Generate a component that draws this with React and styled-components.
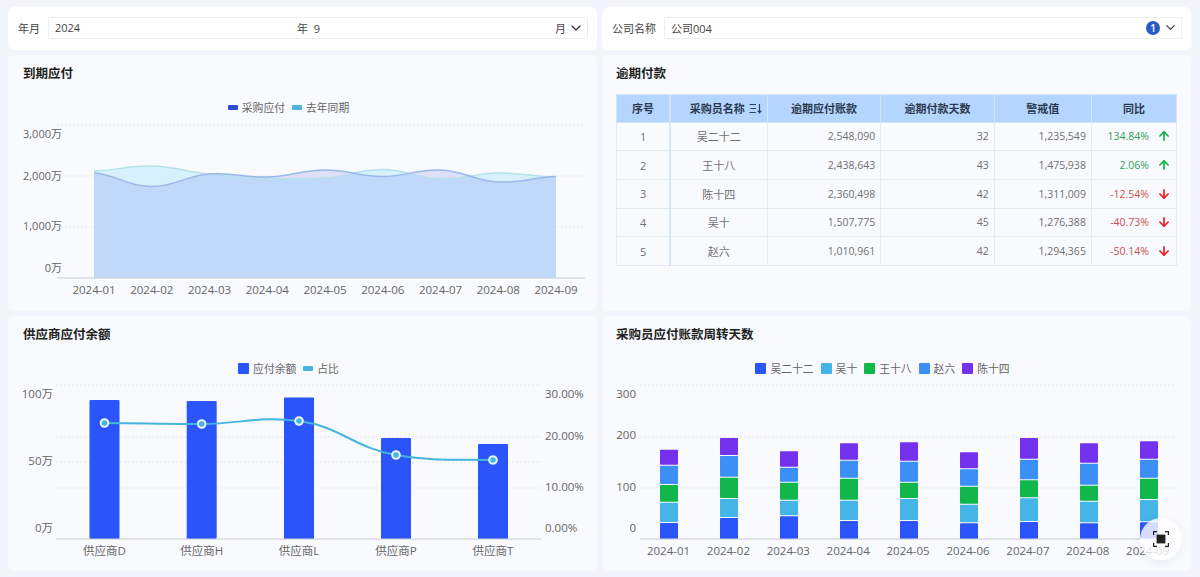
import React from 'react';
import styled, { createGlobalStyle } from 'styled-components';
import { ArrowUp, ArrowDown, ChevronDown } from 'lucide-react';

const GlobalStyle = createGlobalStyle`
  html, body {
    margin: 0;
    padding: 0;
    background: #f3f5fd;
    font-family: "Open Sans", "Noto Sans CJK SC", sans-serif;
  }
`;

const months = ['2024-01', '2024-02', '2024-03', '2024-04', '2024-05', '2024-06', '2024-07', '2024-08', '2024-09'];

const overdueRows = [
  { id: 1, name: '吴二十二', amount: '2,548,090', days: 32, limit: '1,235,549', rate: '134.84%', up: true },
  { id: 2, name: '王十八', amount: '2,438,643', days: 43, limit: '1,475,938', rate: '2.06%', up: true },
  { id: 3, name: '陈十四', amount: '2,360,498', days: 42, limit: '1,311,009', rate: '-12.54%', up: false },
  { id: 4, name: '吴十', amount: '1,507,775', days: 45, limit: '1,276,388', rate: '-40.73%', up: false },
  { id: 5, name: '赵六', amount: '1,010,961', days: 42, limit: '1,294,365', rate: '-50.14%', up: false },
];

const purchaseY = [173, 186.5, 174, 177, 170, 176.5, 170, 182, 176.5];
const lastYearY = [171, 166, 174, 178.5, 178, 169.5, 179, 173, 177];
const areaX = months.map((_, i) => 94 + i * 57.75);

const suppliers = [
  { name: '供应商D', x: 104.5, top: 400, y: 423 },
  { name: '供应商H', x: 201.7, top: 401, y: 424 },
  { name: '供应商L', x: 299, top: 397.5, y: 421 },
  { name: '供应商P', x: 396, top: 438, y: 455 },
  { name: '供应商T', x: 493, top: 444, y: 460 },
];

const stackColors = ['#2b55fb', '#45b4e6', '#12b74b', '#3b8ff5', '#7431ee'];
const stackTops = [
  [523, 502.7, 485, 465.7, 449.7],
  [518, 499, 477.7, 456, 438],
  [516.3, 500.7, 482.7, 467.7, 451.3],
  [521, 500.7, 478.7, 460.7, 443.3],
  [521, 499, 482.7, 461.7, 442.3],
  [523.3, 504.7, 486.7, 469.3, 452.3],
  [522, 498.3, 480.3, 459.7, 438],
  [523.3, 501.7, 485.7, 463.7, 443.3],
  [522.3, 500, 478.7, 459.7, 441.3],
];

function spline(xs, ys) {
  let d = `M${xs[0]} ${ys[0]}`;
  for (let i = 0; i < xs.length - 1; i++) {
    const y0 = ys[Math.max(i - 1, 0)];
    const y3 = ys[Math.min(i + 2, ys.length - 1)];
    const dx = (xs[i + 1] - xs[i]) / 2.4;
    const c1 = ys[i] + (ys[i + 1] - y0) / 6;
    const c2 = ys[i + 1] - (y3 - ys[i]) / 6;
    d += ` C${xs[i] + dx} ${c1} ${xs[i + 1] - dx} ${c2} ${xs[i + 1]} ${ys[i + 1]}`;
  }
  return d;
}

function area(xs, ys, bottom) {
  return `${spline(xs, ys)} L${xs[xs.length - 1]} ${bottom} L${xs[0]} ${bottom} Z`;
}

function DueChart() {
  const purchaseArea = area(areaX, purchaseY, 278);
  const lastYearArea = area(areaX, lastYearY, 278);
  return (
    <ChartSvg viewBox="8 117 589 193">
      <defs>
        <clipPath id="last-year-clip">
          <path d={lastYearArea} />
        </clipPath>
      </defs>
      {[125, 176, 227].map((y) => (
        <GridLine key={y} x1="57" x2="585" y1={y} y2={y} />
      ))}
      <path d={lastYearArea} fill="#d6f1fb" />
      <path d={purchaseArea} fill="#dde0f8" />
      <path d={purchaseArea} fill="#c0d9fb" clipPath="url(#last-year-clip)" />
      <path d={spline(areaX, lastYearY)} fill="none" stroke="#b5e0ec" strokeWidth="1.5" />
      <path d={spline(areaX, purchaseY)} fill="none" stroke="#9ab8ea" strokeWidth="1.5" />
      <AxisLine x1="57" x2="585" y1="278" y2="278" />
      <ValueText x="62" y="138" textAnchor="end">3,000万</ValueText>
      <ValueText x="62" y="180" textAnchor="end">2,000万</ValueText>
      <ValueText x="62" y="230" textAnchor="end">1,000万</ValueText>
      <ValueText x="62" y="272" textAnchor="end">0万</ValueText>
      {months.map((m, i) => (
        <AxisText key={m} x={areaX[i]} y="294" textAnchor="middle">{m}</AxisText>
      ))}
    </ChartSvg>
  );
}

function SupplierChart() {
  const xs = suppliers.map((s) => s.x);
  const ys = suppliers.map((s) => s.y);
  return (
    <ChartSvg viewBox="8 378 589 193">
      {[385, 437, 462, 488].map((y) => (
        <GridLine key={y} x1="56" x2="541" y1={y} y2={y} />
      ))}
      {suppliers.map((s) => (
        <rect key={s.name} x={s.x - 15} y={s.top} width="30" height={539 - s.top} rx="1" fill="#2b55fb" />
      ))}
      <AxisLine x1="56" x2="541" y1="539" y2="539" />
      <path d={spline(xs, ys)} fill="none" stroke="#45b4df" strokeWidth="2" />
      {suppliers.map((s) => (
        <circle key={s.name} cx={s.x} cy={s.y} r="3.8" fill="#45b4df" stroke="#e8f7ff" strokeWidth="2" />
      ))}
      <AxisText x="53" y="398" textAnchor="end">100万</AxisText>
      <AxisText x="53" y="465" textAnchor="end">50万</AxisText>
      <AxisText x="53" y="532" textAnchor="end">0万</AxisText>
      <AxisText x="545" y="398">30.00%</AxisText>
      <AxisText x="545" y="440">20.00%</AxisText>
      <AxisText x="545" y="491">10.00%</AxisText>
      <AxisText x="545" y="532">0.00%</AxisText>
      {suppliers.map((s) => (
        <AxisText key={s.name} x={s.x} y="555" textAnchor="middle">{s.name}</AxisText>
      ))}
    </ChartSvg>
  );
}

function TurnoverChart() {
  return (
    <ChartSvg viewBox="602 378 589 193">
      {[385, 437, 488].map((y) => (
        <GridLine key={y} x1="640" x2="1176" y1={y} y2={y} />
      ))}
      {stackTops.map((tops, i) => {
        const x = 660 + i * 60;
        return tops.map((top, j) => {
          const bottom = j === 0 ? 539 : tops[j - 1] - 1;
          return <rect key={j} x={x} y={top} width="18" height={bottom - top} rx="0.8" fill={stackColors[j]} />;
        });
      })}
      <AxisLine x1="640" x2="1176" y1="539" y2="539" />
      <AxisText x="636" y="398" textAnchor="end">300</AxisText>
      <AxisText x="636" y="439" textAnchor="end">200</AxisText>
      <AxisText x="636" y="491" textAnchor="end">100</AxisText>
      <AxisText x="636" y="532" textAnchor="end">0</AxisText>
      {months.map((m, i) => (
        <AxisText key={m} x={668.5 + i * 59.9} y="555" textAnchor="middle">{m}</AxisText>
      ))}
    </ChartSvg>
  );
}

function SortIcon() {
  return (
    <svg width="13" height="11" viewBox="0 0 13 11" fill="none" stroke="#33415c" strokeWidth="1.2">
      <path d="M0.5 1.5H7M1.5 5.5H7M0.5 9.5H7" />
      <path d="M10.5 1V9.5M8.7 7.6L10.5 9.8L12.3 7.6" />
    </svg>
  );
}

function ScanIcon() {
  return (
    <svg width="16" height="16" viewBox="0 0 16 16" fill="none" stroke="#222" strokeWidth="1.2">
      <path d="M0.6 4V0.6H4M12 0.6H15.4V4M15.4 12V15.4H12M4 15.4H0.6V12" />
      <rect x="3.6" y="3.6" width="8.8" height="8.8" fill="#222" stroke="none" />
    </svg>
  );
}

export default function App() {
  return (
    <Page>
      <GlobalStyle />
      <FilterBar>
        <FilterLabel>年月</FilterLabel>
        <FilterInput>
          <YearPart>2024</YearPart>
          <MonthPart>年&nbsp;&nbsp;9</MonthPart>
          <span>月</span>
          <ChevronDown size={16} color="#333" strokeWidth={1.8} />
        </FilterInput>
      </FilterBar>
      <FilterBar>
        <FilterLabel>公司名称</FilterLabel>
        <FilterInput>
          <MonthPart>公司004</MonthPart>
          <CountBadge>1</CountBadge>
          <ChevronDown size={15} color="#333" strokeWidth={1.8} />
        </FilterInput>
      </FilterBar>

      <Card>
        <CardTitle>到期应付</CardTitle>
        <Legend>
          <LegendItem><LegendBar $color="#2a4fd6" />采购应付</LegendItem>
          <LegendItem><LegendBar $color="#4bb8d8" />去年同期</LegendItem>
        </Legend>
        <DueChart />
      </Card>

      <Card>
        <CardTitle $inset={14}>逾期付款</CardTitle>
        <OverdueTable>
          <thead>
            <tr>
              <HeadCell $width={53.5} $strong>序号</HeadCell>
              <HeadCell $width={97}>
                <SortLabel>采购员名称 <SortIcon /></SortLabel>
              </HeadCell>
              <HeadCell $width={113.5}>逾期应付账款</HeadCell>
              <HeadCell $width={113.5}>逾期付款天数</HeadCell>
              <HeadCell $width={97}>警戒值</HeadCell>
              <HeadCell $width={85}>同比</HeadCell>
            </tr>
          </thead>
          <tbody>
            {overdueRows.map((row) => (
              <tr key={row.id}>
                <BodyCell $strong>{row.id}</BodyCell>
                <BodyCell>{row.name}</BodyCell>
                <NumberCell>{row.amount}</NumberCell>
                <NumberCell>{row.days}</NumberCell>
                <NumberCell>{row.limit}</NumberCell>
                <NumberCell>
                  <RateBox>
                    <RateText $up={row.up}>{row.rate}</RateText>
                    {row.up ? (
                      <ArrowUp size={14} color="#12b74b" strokeWidth={3} />
                    ) : (
                      <ArrowDown size={14} color="#e8262a" strokeWidth={3} />
                    )}
                  </RateBox>
                </NumberCell>
              </tr>
            ))}
          </tbody>
        </OverdueTable>
      </Card>

      <Card>
        <CardTitle>供应商应付余额</CardTitle>
        <Legend>
          <LegendItem><LegendSquare $color="#2b55fb" />应付余额</LegendItem>
          <LegendItem><LegendBar $color="#45b4df" />占比</LegendItem>
        </Legend>
        <SupplierChart />
      </Card>

      <Card>
        <CardTitle $inset={14}>采购员应付账款周转天数</CardTitle>
        <Legend>
          <LegendItem><LegendSquare $color="#2b55fb" />吴二十二</LegendItem>
          <LegendItem><LegendSquare $color="#45b4e6" />吴十</LegendItem>
          <LegendItem><LegendSquare $color="#12b74b" />王十八</LegendItem>
          <LegendItem><LegendSquare $color="#3b8ff5" />赵六</LegendItem>
          <LegendItem><LegendSquare $color="#7431ee" />陈十四</LegendItem>
        </Legend>
        <TurnoverChart />
      </Card>

      <FloatButton>
        <ScanIcon />
      </FloatButton>
    </Page>
  );
}

const Page = styled.div`
  position: relative;
  box-sizing: border-box;
  width: 1200px;
  height: 577px;
  overflow: hidden;
  padding: 7px 9px 6px 8px;
  display: grid;
  grid-template-columns: 589px 589px;
  grid-template-rows: 43px 256px 255px;
  column-gap: 5px;
  row-gap: 5px;
  background: #f3f5fd;
`;
const FilterBar = styled.div`
  display: flex;
  align-items: center;
  padding: 0 9px 2px 10px;
  background: #fff;
  border-radius: 6px;
  color: #444;
  font-size: 11px;
`;
const FilterLabel = styled.label`
  margin-right: 8px;
  white-space: nowrap;
`;
const FilterInput = styled.div`
  flex: 1;
  box-sizing: border-box;
  height: 22px;
  display: flex;
  align-items: center;
  gap: 2px;
  padding: 0 3px 0 6px;
  border: 1px solid #eceff4;
  color: #444;
  font-size: 11px;
`;
const YearPart = styled.span`
  width: 240px;
  flex-shrink: 0;
`;
const MonthPart = styled.span`
  flex: 1;
`;
const CountBadge = styled.span`
  width: 14px;
  height: 14px;
  border-radius: 50%;
  background: #2a5bc4;
  color: #fff;
  font-size: 10px;
  font-weight: 600;
  line-height: 14px;
  text-align: center;
  margin-right: 1px;
`;
const Card = styled.section`
  min-width: 0;
  background: #f9fafd;
  border-radius: 6px;
  overflow: hidden;
`;
const CardTitle = styled.h2`
  margin: 0;
  padding: 11px 15px 0 ${(p) => p.$inset ?? 15}px;
  height: 16px;
  color: #222;
  font-size: 12.5px;
  font-weight: 700;
  line-height: 16px;
`;
const Legend = styled.div`
  height: 16px;
  margin: 17px 0 2px;
  padding-right: 28px;
  display: flex;
  justify-content: center;
  align-items: center;
  gap: 7px;
  color: #666;
  font-size: 10.8px;
`;
const LegendItem = styled.span`
  display: flex;
  align-items: center;
  gap: 4px;
`;
const LegendBar = styled.i`
  width: 10px;
  height: 5px;
  border-radius: 1px;
  background: ${(p) => p.$color};
`;
const LegendSquare = styled.i`
  width: 11px;
  height: 11px;
  border-radius: 1px;
  background: ${(p) => p.$color};
`;
const ChartSvg = styled.svg`
  display: block;
  width: 589px;
  height: 193px;
`;
const GridLine = styled.line`
  stroke: #e4e7ee;
  stroke-width: 1;
  stroke-dasharray: 2 2;
`;
const AxisLine = styled.line`
  stroke: #c8ccd4;
  stroke-width: 1;
`;
const AxisText = styled.text`
  fill: #666;
  font-size: 11.5px;
  font-family: "Open Sans", "Noto Sans CJK SC", sans-serif;
`;
const ValueText = styled(AxisText)`
  font-size: 11px;
`;
const OverdueTable = styled.table`
  margin: 12px 0 0 14px;
  width: 561px;
  table-layout: fixed;
  border-collapse: collapse;
  font-size: 11px;
  color: #707070;
`;
const HeadCell = styled.th`
  width: ${(p) => p.$width}px;
  height: 27.5px;
  box-sizing: border-box;
  padding: 0;
  background: #b4d5fd;
  color: #2c3a50;
  font-size: 11px;
  font-weight: 700;
  text-align: center;
  border: 1px solid #d5e5f8;
  border-right: ${(p) => (p.$strong ? '2px solid #d5e5f8' : '1px solid #d5e5f8')};
`;
const SortLabel = styled.span`
  display: inline-flex;
  align-items: center;
  gap: 4px;
  padding-left: 14px;
`;
const BodyCell = styled.td`
  height: 28.7px;
  box-sizing: border-box;
  padding: 0;
  text-align: center;
  border: 1px solid #e3ebf5;
  border-right: ${(p) => (p.$strong ? '2px solid #d7e4f3' : '1px solid #e3ebf5')};
`;
const NumberCell = styled(BodyCell)`
  padding-right: 5px;
  font-size: 10.5px;
  text-align: right;
`;
const RateBox = styled.span`
  display: flex;
  justify-content: flex-end;
  align-items: center;
  gap: 8px;
`;
const RateText = styled.span`
  color: ${(p) => (p.$up ? '#2d9f5c' : '#c9504f')};
`;
const FloatButton = styled.button`
  position: absolute;
  left: 1140px;
  top: 518px;
  width: 42px;
  height: 42px;
  padding: 0;
  display: flex;
  align-items: center;
  justify-content: center;
  border: none;
  border-radius: 50%;
  background: rgba(255, 255, 255, 0.8);
  box-shadow: 0 2px 10px rgba(60, 70, 110, 0.08);
`;
